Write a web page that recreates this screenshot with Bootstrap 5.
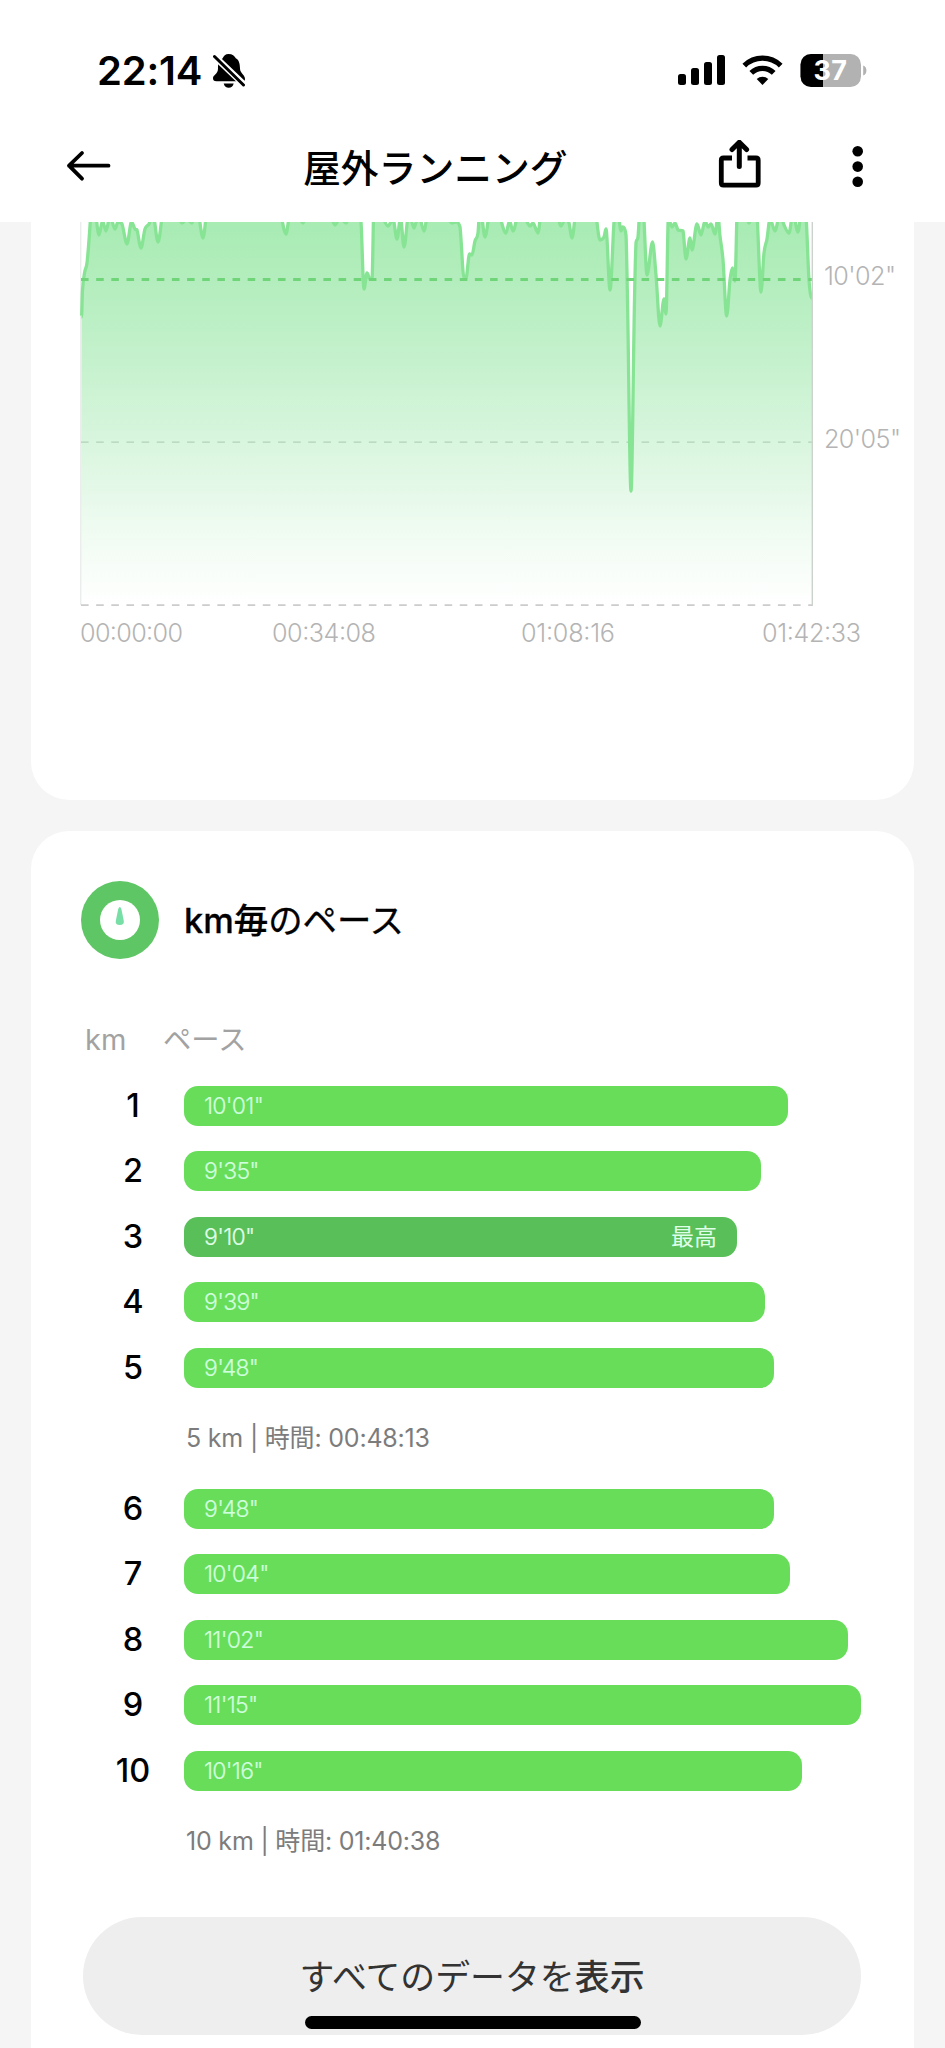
<!DOCTYPE html>
<html lang="ja">
<head>
<meta charset="utf-8">
<meta name="viewport" content="width=device-width, initial-scale=1">
<title>屋外ランニング</title>
<link href="https://cdn.jsdelivr.net/npm/bootstrap@5.3.0/dist/css/bootstrap.min.css" rel="stylesheet">
<style>
  body { background:#f5f5f5; font-family:Inter,"Noto Sans CJK JP",sans-serif; color:#000; height:2048px; overflow:hidden; }
  svg { display:block; flex:none; }
  .topbar { height:222px; }
  .status { height:108px; padding:33px 78px 0 97px; }
  .clock { font-size:40px; font-weight:600; letter-spacing:-.2px; line-height:75px; width:116px; white-space:nowrap; }
  .bell { margin-top:20px; }
  .indicators { margin-top:19px; }
  .appnav { height:114px; padding:0 82px 0 66px; }
  .apptitle { font-size:37.8px; font-weight:500; line-height:60px; padding-top:5px; }
  .apptitle, .side { flex:none; }
  .side { width:237px; }
  .side-end { padding-left:150px; width:294px; }
  .panel { margin:0 31px; border:0; border-radius:0; background:#fff; }
  .panel-chart { height:578px; border-radius:0 0 38px 38px; }
  .panel-laps { margin-top:31px; height:1217px; border-radius:38px 38px 0 0; padding:50px 53px 0 51px; }
  .chart text { font-family:Inter,sans-serif; font-size:25.2px; font-weight:350; fill:#b4b4b4; }
  .dial { margin-left:-1px; }
  .lap-title { font-size:34.4px; line-height:50px; font-weight:400; margin-left:25px; padding-top:1px; -webkit-text-stroke:.3px #000; }
  .lap-title b { font-weight:500; }
  .lap-head { color:#a2a2a2; font-size:28.3px; font-weight:400; line-height:40px; margin-top:61px; padding-left:3px; height:65.7px; }
  .lap-head span:first-child { width:78px; font-size:29px; }
  .laps { display:flex; flex-direction:column; gap:25.5px; }
  .km { width:102px; height:40px; text-align:center; font-size:32.5px; font-weight:500; line-height:40px; flex:none; }
  .pace { height:40px; border-radius:14px; background:#68dd5a; color:#d0ffdf; font-size:23px; font-weight:300; letter-spacing:-.7px; line-height:40px; padding:0 20px; -webkit-text-stroke:.2px currentColor; }
  .pace-best { background:#59bf59; color:#e0ffea; }
  .best-tag { letter-spacing:0; font-weight:400; -webkit-text-stroke:0; }
  .sum { height:50.3px; line-height:50px; margin-left:104px; font-size:25px; font-weight:400; letter-spacing:-.2px; color:#7c7c7c; white-space:nowrap; }
  .more { margin:50px 0 0 1px; width:778px; height:118px; border-radius:59px; border:0; background:#eee; color:#333; font-size:34.9px; font-weight:400; padding:2px 0 0; }
  .more b { font-weight:500; }
  .home { position:fixed; left:305px; top:2016px; width:336px; height:12.5px; border-radius:7px; background:#000; }
</style>
</head>
<body>
<header class="topbar bg-white">
  <div class="status d-flex align-items-start">
    <div class="clock">22:14</div>
    <svg class="bell" width="34" height="36" viewBox="213 53 34 36">
      <path d="M228.5 54c4 0 6 2 7.500 4.500 3 1 4 6 4 10 0 5 5 6 5 10.500 0 2-1 2.300-3 2.300h-25.500c-2.500 0-3.500-1-3.500-3 0-3.500 5-4 5-9.800 0-4 .5-8 4.500-10 1.200-2.700 3-4.500 6-4.500z"/>
      <path d="M223.700 83.500h10c-.8 3-2.500 4.300-5 4.300s-4.200-1.300-5-4.300z"/>
      <path d="M212 54l34 32.500" stroke="#fff" stroke-width="6.500"/>
      <path d="M214.500 56.500l29 28.500" stroke="#000" stroke-width="3" stroke-linecap="round"/>
    </svg>
    <svg class="indicators ms-auto" width="190" height="37" viewBox="677 52 190 37">
      <rect x="678" y="74" width="8" height="11" rx="2.500"/><rect x="691" y="68" width="8" height="17" rx="2.500"/>
      <rect x="704" y="62" width="8" height="23" rx="2.500"/><rect x="717" y="55" width="8" height="30" rx="2.500"/>
      <path d="M762.500 85l-5.800-5.900a8.500 8.500 0 0 1 11.600 0z"/>
      <path d="M751.300 72.900a16 16 0 0 1 22.400 0" fill="none" stroke="#000" stroke-width="5.300"/>
      <path d="M744.300 65.600a26 26 0 0 1 36.400 0" fill="none" stroke="#000" stroke-width="5.300"/>
      <clipPath id="bat"><rect x="800.500" y="54" width="60.500" height="33" rx="10.500"/></clipPath>
      <g clip-path="url(#bat)"><path d="M800 54h62v33h-62z" fill="#b2b2b2"/><path d="M800 54h23v33h-23z"/></g>
      <path d="M863.200 65.500q3.200 1 3.200 5t-3.200 5z" fill="#b2b2b2"/>
      <text x="813.500" y="80" font-size="27" font-weight="700" fill="#fff" textLength="33.500">37</text>
    </svg>
  </div>
  <nav class="appnav d-flex align-items-center">
    <div class="side"><svg width="46" height="34" viewBox="66 149 46 34"><path d="M108.500 166.700H69M82 154L69 166.700l13 13" fill="none" stroke="#000" stroke-width="3.800" stroke-linecap="round" stroke-linejoin="round"/></svg></div>
    <h1 class="apptitle m-0">屋外ランニング</h1>
    <div class="side-end d-flex align-items-center">
      <svg width="145" height="50" viewBox="717 140 145 50" fill="none" stroke="#000">
        <path d="M731 158h-8.500q-2.200 0-2.200 2.200v22.800q0 2.200 2.200 2.200h32.500q2.200 0 2.200-2.200v-22.800q0-2.200-2.200-2.200h-8.500" stroke-width="4.800"/>
        <path d="M738.300 166.500V143M731 149.500l7.300-7.300 7.300 7.300" stroke-width="5" stroke-linecap="round" stroke-linejoin="round"/>
        <g fill="#000" stroke="none"><circle cx="856.700" cy="151.300" r="5.300"/><circle cx="856.700" cy="166.600" r="5.300"/><circle cx="856.700" cy="181.700" r="5.300"/></g>
      </svg>
    </div>
  </nav>
</header>

<main>
  <section class="card panel panel-chart">
    <svg class="chart" width="883" height="440" viewBox="31 222 883 440">
      <defs><linearGradient id="fade" x1="0" y1="222" x2="0" y2="605" gradientUnits="userSpaceOnUse">
        <stop offset="0" stop-color="#a8ebb3"/><stop offset=".25" stop-color="#bbefc4"/><stop offset=".55" stop-color="#d6f5dc"/><stop offset=".8" stop-color="#effbf1"/><stop offset="1" stop-color="#fff"/>
      </linearGradient></defs>
      <path id="area" fill="url(#fade)"/>
      <path d="M80.800 222V605" stroke="#e2e6e3"/>
      <path d="M81 442.200H812" stroke="#b4cfba" stroke-width="1.200" stroke-dasharray="7.600 7.550"/>
      <path id="line" fill="none" stroke="#87e494" stroke-width="3.300" stroke-linejoin="round"/>
      <path d="M81 279.500H812" stroke="#70d579" stroke-width="3" stroke-dasharray="7.600 7.550"/>
      <path d="M81 605.200H812" stroke="#ccc" stroke-width="1.800" stroke-dasharray="7.600 7.550"/>
      <path d="M812.300 222V606" stroke="#ccd3cd" stroke-width="1.400"/>
      <text x="824" y="285" textLength="72">10'02"</text>
      <text x="824" y="448" textLength="77">20'05"</text>
      <text x="80" y="642" textLength="103">00:00:00</text>
      <text x="272" y="642" textLength="104">00:34:08</text>
      <text x="521" y="642" textLength="94">01:08:16</text>
      <text x="762" y="642" textLength="99">01:42:33</text>
    </svg>
  </section>

  <section class="card panel panel-laps">
    <div class="d-flex align-items-center">
      <svg class="dial" width="78" height="78" viewBox="0 0 78 78"><circle cx="39" cy="39" r="39" fill="#5ec664"/><circle cx="39" cy="39" r="20" fill="#fff"/><path d="M38.800 26q1.200 0 1.700 2.500l2.300 11.500q.6 4-4 4t-4-4l2.300-11.500q.5-2.500 1.700-2.500z" fill="#77dfa5"/></svg>
      <h2 class="lap-title mb-0"><b>km毎</b>のペース</h2>
    </div>
    <div class="lap-head d-flex"><span>km</span><span>ペース</span></div>
    <div class="laps">
      <div class="d-flex"><div class="km">1</div><div class="pace" style="width:604px">10'01"</div></div>
      <div class="d-flex"><div class="km">2</div><div class="pace" style="width:577px">9'35"</div></div>
      <div class="d-flex"><div class="km">3</div><div class="pace pace-best d-flex justify-content-between" style="width:553px"><span>9'10"</span><span class="best-tag">最高</span></div></div>
      <div class="d-flex"><div class="km">4</div><div class="pace" style="width:581px">9'39"</div></div>
      <div class="d-flex"><div class="km">5</div><div class="pace" style="width:590px">9'48"</div></div>
      <div class="sum">5 km | 時間: 00:48:13</div>
      <div class="d-flex"><div class="km">6</div><div class="pace" style="width:590px">9'48"</div></div>
      <div class="d-flex"><div class="km">7</div><div class="pace" style="width:606px">10'04"</div></div>
      <div class="d-flex"><div class="km">8</div><div class="pace" style="width:664px">11'02"</div></div>
      <div class="d-flex"><div class="km">9</div><div class="pace" style="width:677.500px">11'15"</div></div>
      <div class="d-flex"><div class="km">10</div><div class="pace" style="width:618px">10'16"</div></div>
      <div class="sum">10 km | 時間: 01:40:38</div>
    </div>
    <button class="btn more" type="button">すべてのデータを<b>表示</b></button>
  </section>
</main>
<div class="home"></div>

<script src="https://cdn.jsdelivr.net/npm/bootstrap@5.3.0/dist/js/bootstrap.bundle.min.js"></script>
<script>
  // Pace samples: x = time, y = pace (slower is lower)
  const pts = [[81.5,317],[82.5,290],[84.5,273],[87,263],[89,240],[91,214],[94,205],[99,235],[102.5,221],[106,231],[110,216],[115,229],[118,222],[122,224],[127,244],[131.5,222],[135,229],[137,230],[141,248],[145,229],[149,224],[153,215],[158,242],[164,208],[174,208],[182,223],[187,219],[192,223],[197,208],[203,238],[208,205],[278,205],[286,234],[291,206],[297,212],[303,223],[308,206],[328,208],[335,225],[340,217],[346,223],[352,205],[358,205],[361,222],[364,289],[367,273],[370,279],[372,279],[374,205],[382,216],[388,226],[393,219],[397,239],[400.500,218],[404,247],[409,212],[414,228],[418.500,214],[424,231],[429,205],[445,212],[452,223],[456,222],[460,227],[464,278],[466,278],[469.500,254],[472,255],[475,241],[478,233],[480,205],[485,237],[491,205],[498,211],[506,233],[509.500,221],[513,231],[519,212],[526,220],[530,226],[533,223],[538,233],[542,205],[555,205],[561,226],[566,217],[569,223],[572,238],[577,205],[594,205],[600,240],[604,237],[606,229],[610,290],[615,214],[618,214],[621,231],[622.500,227],[626,235],[627.500,300],[631,491],[634.500,300],[636,243],[638,237],[640,210],[643,210],[647,275],[652.500,242],[656,275],[660,326],[664,299],[666,314],[668.500,214],[670,222],[672,227],[675,223],[678,230],[683,231],[686,259],[690,238],[692,250],[697,224],[701,235],[705,221],[708,227],[711,224],[715,234],[718,216],[720,236],[723,260],[726.700,316],[730,280],[732.500,268],[735,281],[737.500,205],[744,205],[749,223],[754,205],[757,215],[761,292],[764,253],[767,239],[770,219],[775,231],[780,213],[784,225],[789,233],[793,213],[798,232],[802,207],[806,216],[809,280],[812,298]];
  const tan = pts.map((p, i) => {
    const a = pts[i-1], b = pts[i+1];
    if (!a || !b || (p[1]-a[1])*(b[1]-p[1]) <= 0) return 0;
    return (b[1]-a[1])/(b[0]-a[0]);
  });
  let d = `M${pts[0]}`;
  for (let i = 1; i < pts.length; i++) {
    const [x0,y0] = pts[i-1], [x1,y1] = pts[i], h = (x1-x0)/3;
    const lim = v => Math.max(Math.min(y0,y1), Math.min(Math.max(y0,y1), v));
    d += `C${x0+h},${lim(y0+tan[i-1]*h)} ${x1-h},${lim(y1-tan[i]*h)} ${x1},${y1}`;
  }
  document.getElementById('line').setAttribute('d', d);
  document.getElementById('area').setAttribute('d', d + 'V605H81Z');
</script>
</body>
</html>
